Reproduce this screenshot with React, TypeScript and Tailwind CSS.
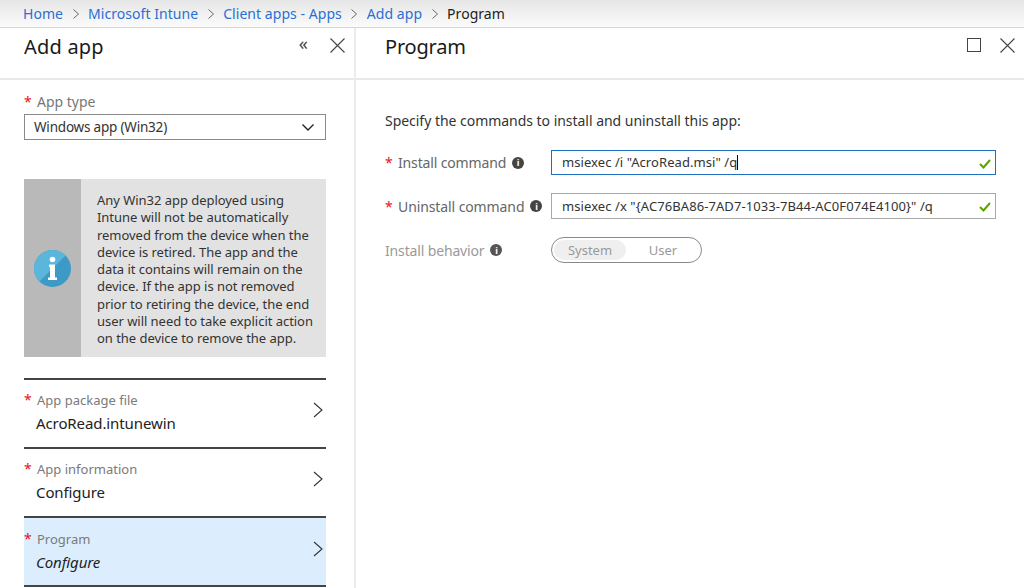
import React from "react";

const F = "font-['Noto_Sans','Open_Sans',sans-serif]";

function Chevron({ className = "" }: { className?: string }) {
  return (
    <svg viewBox="0 0 10 16" className={className} fill="none" stroke="#333" strokeWidth="1.1">
      <path d="M1 1l8 7-8 7" />
    </svg>
  );
}
function Crumb({ children }: { children: React.ReactNode }) {
  return <span className="text-[#2a6fd6]">{children}</span>;
}
function Sep() {
  return (
    <svg viewBox="0 0 6 10" className="w-[6px] h-[10px] mx-[9.500px]" fill="none" stroke="#666" strokeWidth="1">
      <path d="M.5 .5L5.500 5 .5 9.500" />
    </svg>
  );
}
function X({ className = "" }: { className?: string }) {
  return (
    <svg viewBox="0 0 15 15" className={className} fill="none" stroke="#444" strokeWidth="1.1">
      <path d="M.5 .5l14 14M14.500 .5l-14 14" />
    </svg>
  );
}
function Info({ faded = false }: { faded?: boolean }) {
  return (
    <span className={`ml-[6px] inline-flex w-[12px] h-[12px] rounded-full items-center justify-center text-white text-[9px] font-bold leading-none ${faded ? "bg-[#555]" : "bg-[#444]"}`}>
      i
    </span>
  );
}
function Check() {
  return (
    <svg viewBox="0 0 12 10" className="absolute right-[4px] top-[8px] w-[12px] h-[10px]" fill="none" stroke="#5ba300" strokeWidth="2">
      <path d="M1 5l3.500 3.500L11 1" />
    </svg>
  );
}
function Star({ className = "" }: { className?: string }) {
  return <span className={`text-[#e81123] ${className}`}>*</span>;
}
function Row({ label, value, active, italic }: { label: string; value: string; active?: boolean; italic?: boolean }) {
  return (
    <div className={`h-[69px] border-t-2 border-[#444] flex items-start pr-[3px] ${active ? "bg-[#dceefe] pt-[12px]" : "pt-[11px]"}`}>
      <div className="flex-1 pl-[12px] relative">
        <Star className="absolute left-[0px] top-[-2px] text-[14px]" />
        <div className="pl-[1px] text-[13px] leading-[18px] text-[#7a7a7a]">{label}</div>
        <div className={`mt-[3px] text-[15px] leading-[22px] text-[#222] tracking-[-0.1px] ${italic ? "italic" : ""}`}>{value}</div>
      </div>
      <Chevron className="w-[10px] h-[16px] mt-[11px]" />
    </div>
  );
}

export default function App() {
  return (
    <div className={`${F} w-[1024px] h-[588px] overflow-hidden bg-white flex flex-col`}>
      <div className="h-[28px] shrink-0 flex items-center pl-[23px] border-b border-[#d6d6d6] bg-gradient-to-b from-[#e6e6e6] to-[#fbfbfb] text-[14px] tracking-[0.05px]">
        <Crumb>Home</Crumb><Sep />
        <Crumb>Microsoft Intune</Crumb><Sep />
        <Crumb>Client apps - Apps</Crumb><Sep />
        <Crumb>Add app</Crumb><Sep />
        <span className="text-[#222]">Program</span>
      </div>
      <div className="flex flex-1 min-h-0">
        <div className="w-[356px] shrink-0 border-r-2 border-[#ececec] flex flex-col">
          <div className="h-[52px] shrink-0 border-b-2 border-[#e8e8e8] flex items-start pl-[24px] pr-[9px]">
            <span className="text-[20px] leading-[38px] text-[#1a1a1a] font-normal flex-1 tracking-[0.2px]">Add app</span>
            <span className="text-[18px] leading-[31px] text-[#444] mr-[22px]">«</span>
            <X className="w-[15px] h-[15px] mt-[10px]" />
          </div>
          <div className="px-[24px] pr-[28px] pt-[12px]">
            <div className="flex items-center h-[18px] text-[14px] text-[#777]">
              <Star className="w-[13px]" />App type
            </div>
            <div className="mt-[4px] h-[26px] border border-[#8a8a8a] flex items-center justify-between pl-[9px] pr-[11px] text-[13.500px] text-[#333] tracking-[-0.2px]">
              Windows app (Win32)
              <svg viewBox="0 0 12 7" className="w-[12px] h-[7px]" fill="none" stroke="#222" strokeWidth="1.400"><path d="M.5 .5L6 6l5.500-5.500" /></svg>
            </div>
            <div className="mt-[39px] h-[178px] flex bg-[#e2e2e2]">
              <div className="w-[57px] shrink-0 bg-[#b9b9b9] flex items-center justify-center">
                <svg viewBox="0 0 37 37" className="w-[37px] h-[37px] mt-[1px]">
                  <circle cx="18.500" cy="18.500" r="18.500" fill="#3b9ac6" />
                  <path d="M5.400 31.600A18.500 18.500 0 0 1 31.600 5.400z" fill="#5bb6dc" />
                  <circle cx="18.500" cy="9.500" r="2.800" fill="#fff" />
                  <path d="M15 14.500h6v13h2v2.500H14v-2.500h2v-10.500h-1z" fill="#fff" />
                </svg>
              </div>
              <div className="pl-[16px] pr-[4px] pt-[13px] text-[13px] leading-[17.250px] text-[#333] tracking-[-0.04px] whitespace-nowrap">
                Any Win32 app deployed using<br />
                Intune will not be automatically<br />
                removed from the device when the<br />
                device is retired. The app and the<br />
                data it contains will remain on the<br />
                device. If the app is not removed<br />
                prior to retiring the device, the end<br />
                user will need to take explicit action<br />
                on the device to remove the app.
              </div>
            </div>
            <div className="mt-[21px] border-b-2 border-[#444]">
              <Row label="App package file" value="AcroRead.intunewin" />
              <Row label="App information" value="Configure" />
              <Row label="Program" value="Configure" active italic />
            </div>
          </div>
        </div>
        <div className="flex-1 flex flex-col min-w-0">
          <div className="h-[52px] shrink-0 border-b-2 border-[#e8e8e8] flex items-start pl-[29px] pr-[9px]">
            <span className="text-[20px] leading-[38px] text-[#1a1a1a] flex-1 tracking-[-0.2px]">Program</span>
            <span className="w-[14px] h-[14px] border-[1.5px] border-[#444] mt-[10px] mr-[19px]" />
            <X className="w-[15px] h-[15px] mt-[10px]" />
          </div>
          <div className="pl-[29px] pr-[28px] pt-[31px]">
            <div className="text-[14px] leading-[20px] text-[#333] tracking-[-0.03px]">Specify the commands to install and uninstall this app:</div>
            <div className="mt-[19px] flex items-center h-[25px]">
              <div className="w-[166px] shrink-0 flex items-center text-[14px] text-[#666] tracking-[-0.15px]">
                <Star className="w-[13px]" />Install command<Info />
              </div>
              <div className="relative flex-1 h-[25px] border border-[#1f6fbf] pl-[10px] flex items-center text-[13px] text-[#333] tracking-[0.07px]">
                msiexec /i "AcroRead.msi" /q<span className="w-[1px] h-[15px] bg-black" />
                <Check />
              </div>
            </div>
            <div className="mt-[18px] flex items-center h-[26px]">
              <div className="w-[166px] shrink-0 flex items-center text-[14px] text-[#666] tracking-[-0.1px] whitespace-nowrap">
                <Star className="w-[13px]" />Uninstall command<Info />
              </div>
              <div className="relative flex-1 h-[26px] border border-[#a8a8a8] pl-[10px] pt-[1px] flex items-center text-[13px] text-[#333] tracking-[0.08px]">
                msiexec /x "{"{"}AC76BA86-7AD7-1033-7B44-AC0F074E4100{"}"}" /q
                <Check />
              </div>
            </div>
            <div className="mt-[18px] flex items-center h-[26px]">
              <div className="w-[166px] shrink-0 flex items-center text-[14px] text-[#9a9a9a] tracking-[-0.15px]">
                Install behavior<Info faded />
              </div>
              <div className="w-[151px] h-[26px] border border-[#8a8a8a] rounded-full flex items-center px-[2px] pt-[1px] text-[13px] text-[#9a9a9a]">
                <span className="w-[72px] h-[20px] mt-[-1px] rounded-full bg-[#efefef] flex items-center justify-center pt-[1px]">System</span>
                <span className="flex-1 text-center pl-[1px]">User</span>
              </div>
            </div>
          </div>
        </div>
      </div>
    </div>
  );
}
